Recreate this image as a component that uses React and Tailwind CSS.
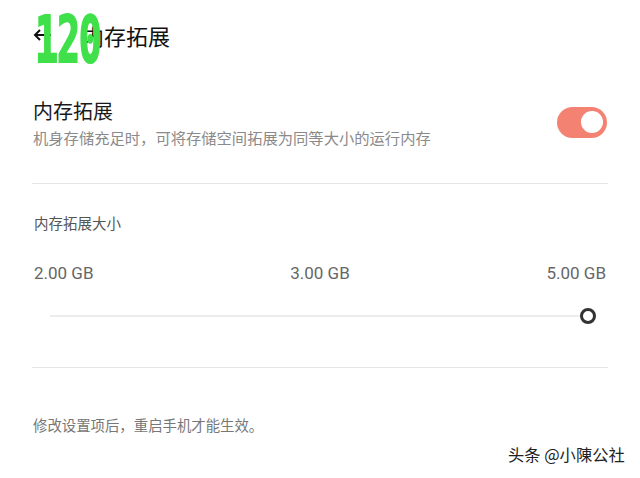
import React from "react";

export default function App() {
  const cjk = { fontFamily: '"Noto Sans CJK SC", "Noto Sans", sans-serif' };
  return (
    <div className="relative w-[640px] h-[478px] bg-white overflow-hidden" style={cjk}>
      {/* Header */}
      <div className="flex items-center h-[74px] pl-[32px] pb-[4px]">
        <svg width="20" height="14" viewBox="0 0 20 14">
          <path d="M19 7H3M8 2L3 7l5 5" stroke="#111" strokeWidth="2" fill="none" />
        </svg>
        <span className="ml-[30px] text-[22px] leading-none text-[#111]">内存拓展</span>
      </div>

      {/* FPS overlay */}
      <div
        className="absolute left-[35px] top-[8px] text-[64px] leading-none font-bold text-[#3fe04a] origin-left scale-x-[0.6] tracking-[-2px]"
        style={{ fontFamily: '"DejaVu Sans Mono", monospace', WebkitTextStroke: "2px #3fe04a" }}
      >
        120
      </div>

      {/* Toggle row */}
      <div className="flex items-center justify-between px-[33px] pt-[24px]">
        <div className="flex flex-col">
          <span className="text-[20px] leading-[26px] text-[#1a1a1a]">内存拓展</span>
          <span className="mt-[4px] text-[15.3px] leading-[18px] text-[#8a8a8a]">机身存储充足时，可将存储空间拓展为同等大小的运行内存</span>
        </div>
        <div className="flex items-center justify-end w-[50px] h-[31px] rounded-full bg-[#f48272] pr-[4px]">
          <div className="w-[22px] h-[22px] rounded-full bg-white" />
        </div>
      </div>

      <div className="mx-[32px] mt-[37px] h-px bg-[#e6e6e6]" />

      <div className="px-[34px] pt-[30px]">
        <div className="text-[14.5px] leading-[18px] text-[#555]">内存拓展大小</div>
        <div
          className="flex justify-between mt-[31px] text-[17px] leading-[20px] text-[#666]"
          style={{ fontFamily: 'Roboto, "Liberation Sans", sans-serif' }}
        >
          <span>2.00 GB</span>
          <span>3.00 GB</span>
          <span>5.00 GB</span>
        </div>
        <div className="relative flex items-center mt-[24px] ml-[16px] mr-[10px] h-[18px]">
          <div className="flex-1 h-[2px] bg-[#ececec]" />
          <div className="w-[16px] h-[16px] rounded-full border-[3px] border-[#333] bg-white -ml-[2px]" />
        </div>
      </div>

      <div className="mx-[32px] mt-[42px] h-px bg-[#e6e6e6]" />

      <div className="px-[33px] pt-[48px] text-[14.4px] leading-[18px] text-[#777]">
        修改设置项后，重启手机才能生效。
      </div>

      {/* Watermark */}
      <div
        className="absolute left-[508px] top-[444px] text-[16.3px] leading-[20px] text-[#222]"
        style={{ textShadow: "0 0 2px #fff, 0 0 2px #fff" }}
      >
        头条 @小陳公社
      </div>
    </div>
  );
}
